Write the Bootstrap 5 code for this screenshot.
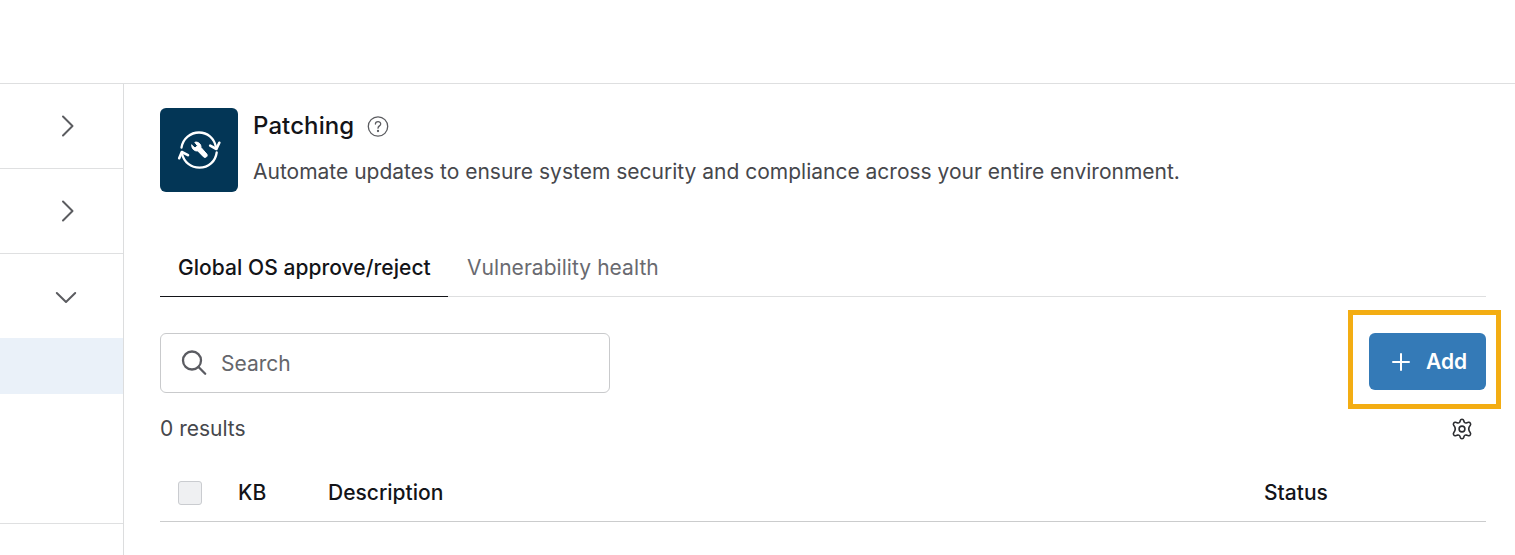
<!DOCTYPE html>
<html lang="en">
<head>
<meta charset="utf-8">
<meta name="viewport" content="width=device-width, initial-scale=1">
<title>Patching</title>
<link href="https://cdn.jsdelivr.net/npm/bootstrap@5.3.0/dist/css/bootstrap.min.css" rel="stylesheet">
<style>
  body { font-family: Inter, "Liberation Sans", sans-serif; font-size: 21px; line-height: 30px; color: #46474c; background: #fff; }
  svg { display: block; flex: none; }
  .topbar { height: 84px; border-bottom: 1px solid #dedfe0; }
  .workspace { height: 471px; }
  .side { width: 124px; border-right: 1px solid #dcddde; }
  .side-item { height: 85px; border-bottom: 1px solid #dfe0e1; padding-left: 54px; color: #5b5c60; }
  .side-item.open { height: 84px; border-bottom: 0; }
  .side-active { height: 56px; background: #eaf1f9; }
  .side-rest { height: 130px; border-bottom: 1px solid #dfe0e1; }
  .content-area { padding: 24px 29px 0 36px; min-width: 0; }
  .app-tile { width: 78px; height: 84px; border-radius: 6px; background: #033656; }
  .app-copy { padding-left: 15px; }
  .page-title { font-size: 24px; line-height: 36px; font-weight: 450; letter-spacing: .1px; color: #131418; }
  .title-line { gap: 13px; margin-bottom: 13px; }
  .tabs-row { margin-top: 48px; height: 57px; border-bottom: 1px solid #dedfe0; }
  .tabs-row .nav-link { height: 57px; padding: 13px 18px 0 19px; color: #696a70; letter-spacing: .05px; white-space: nowrap; }
  .tabs-row .nav-link.active { color: #131418; font-weight: 500; border-bottom: 1px solid #131418; width: 288px; padding-left: 18px; }
  .search-box { width: 450px; height: 60px; border: 1px solid #c9cacc; border-radius: 6px; padding: 1px 0 0 20px; gap: 13px; color: #65666b; }
  .tool-row { margin-top: 36px; height: 60px; }
  .btn-add { width: 117px; height: 57px; border-radius: 6px; background: #347ab7; color: #fff; font-size: 21px; font-weight: 600; padding: 0 0 0 21px; gap: 15px; }
  .callout-box { position: absolute; inset: -23px -15px -19px -21px; border: 5px solid #f3ad13; pointer-events: none; }
  .result-row { margin-top: 21px; height: 30px; padding-right: 13px; }
  .grid-head { margin-top: 20px; height: 58px; border-bottom: 1px solid #cbcccd; color: #131418; font-weight: 500; padding-left: 18px; }
  .grid-head .form-check-input { width: 24px; height: 24px; margin: 0; background: #eff0f2; border: 1px solid #caccd0; border-radius: 3px; opacity: 1; }
  .col-kb { width: 90px; margin-left: 36px; }
  .col-status { width: 222px; }
</style>
</head>
<body class="overflow-hidden">
<header class="topbar"></header>
<div class="workspace d-flex">
  <nav class="side flex-shrink-0">
    <div class="side-item d-flex align-items-center"><svg width="24" height="24" fill="none" stroke="currentColor" stroke-width="2" stroke-linecap="round" stroke-linejoin="round"><path d="M9 2.500l9.500 9.500L9 21.500"/></svg></div>
    <div class="side-item d-flex align-items-center"><svg width="24" height="24" fill="none" stroke="currentColor" stroke-width="2" stroke-linecap="round" stroke-linejoin="round"><path d="M9 2.500l9.500 9.500L9 21.500"/></svg></div>
    <div class="side-item open d-flex align-items-center"><svg width="24" height="24" fill="none" stroke="currentColor" stroke-width="2" stroke-linecap="round" stroke-linejoin="round"><path d="M2.800 9l9.200 9 9.200-9"/></svg></div>
    <div class="side-active"></div>
    <div class="side-rest"></div>
  </nav>
  <main class="content-area flex-grow-1">
    <div class="d-flex">
      <div class="app-tile d-flex align-items-center justify-content-center flex-shrink-0">
        <svg width="44" height="44" viewBox="0 0 44 44" fill="none" stroke="#fff" stroke-width="2.300" stroke-linecap="round" stroke-linejoin="round">
          <path d="M4.500 19.500C6 10.500 13.500 4.500 22 4.500c8.500 0 15 5.500 17 14.500"/>
          <path d="M33.200 17.600l6.200 3.400 2.900-6.200" stroke-width="2.600"/>
          <path d="M39.700 24.500C38.500 33.500 31.500 39.700 22.500 39.700c-8.500 0-15.500-5.500-17.500-14"/>
          <path d="M2.200 30.200L4.800 24l6.200 3.200" stroke-width="2.600"/>
          <path d="M14.800 17.200l3.200 2.800 2.500-2.200-2.700-3.500c3-1 6.500 1.700 6.200 5.200l5.800 6.600c1.500 2-1.300 4.500-3.200 2.800l-5.900-6c-3 .5-6.300-2-5.900-5.700z" fill="#fff" stroke-width="1"/>
        </svg>
      </div>
      <div class="app-copy">
        <div class="title-line d-flex align-items-center">
          <h1 class="page-title mb-0">Patching</h1>
          <svg width="22" height="22" viewBox="0 0 22 22" fill="none" stroke="#5b5c60" stroke-width="1.300" stroke-linecap="round"><circle cx="11" cy="11.500" r="9.700"/><path d="M8.400 9.100c.1-3.300 5.300-3.200 5.300-.2 0 2-2.700 2-2.700 4.300"/><circle cx="11" cy="16" r=".5" fill="#5b5c60"/></svg>
        </div>
        <p class="mb-0 text-nowrap">Automate updates to ensure system security and compliance across your entire environment.</p>
      </div>
    </div>
    <ul class="nav tabs-row">
      <li class="nav-item"><a class="nav-link active" href="#">Global OS approve/reject</a></li>
      <li class="nav-item"><a class="nav-link" href="#">Vulnerability health</a></li>
    </ul>
    <div class="tool-row d-flex justify-content-between align-items-start">
      <div class="search-box d-flex align-items-center">
        <svg width="27" height="27" viewBox="0 0 27 27" fill="none" stroke="#5b5c62" stroke-width="2.300" stroke-linecap="round"><circle cx="11" cy="10.500" r="9"/><path d="M17.500 17l6.700 6.700"/></svg>
        <span>Search</span>
      </div>
      <div class="position-relative">
        <button class="btn btn-add d-flex align-items-center" type="button">
          <svg width="20" height="20" fill="none" stroke="#fff" stroke-width="2" stroke-linecap="round"><path d="M10 2v16M2 10h16"/></svg>
          <span>Add</span>
        </button>
        <div class="callout-box"></div>
      </div>
    </div>
    <div class="result-row d-flex justify-content-between align-items-center">
      <span>0 results</span>
      <svg width="22" height="22" viewBox="0 0 22 22" fill="none" stroke="#2c2d31" stroke-width="1.600" stroke-linejoin="round"><path d="M9.300 2.500Q9.600 1.300 11 1.300T12.700 2.500Q13.200 5.300 15.300 4.900L17.500 4.300Q18.600 4 19.300 5.200T19.300 7.300Q16.200 11 19.300 14.700Q20 15.600 19.300 16.800T17.500 17.700L15.300 17.100Q13.200 16.700 12.700 19.500Q12.400 20.700 11 20.700T9.300 19.500Q8.800 16.700 6.700 17.100L4.500 17.700Q3.400 18 2.700 16.800T2.700 14.700Q5.800 11 2.700 7.300Q2 6.400 2.700 5.200T4.500 4.300L6.700 4.900Q8.800 5.300 9.300 2.500z"/><circle cx="11" cy="11" r="2.900"/></svg>
    </div>
    <div class="grid-head d-flex align-items-center">
      <input class="form-check-input" type="checkbox" aria-label="Select all">
      <div class="col-kb">KB</div>
      <div class="flex-grow-1">Description</div>
      <div class="col-status">Status</div>
    </div>
  </main>
</div>
<script src="https://cdn.jsdelivr.net/npm/bootstrap@5.3.0/dist/js/bootstrap.bundle.min.js"></script>
</body>
</html>
